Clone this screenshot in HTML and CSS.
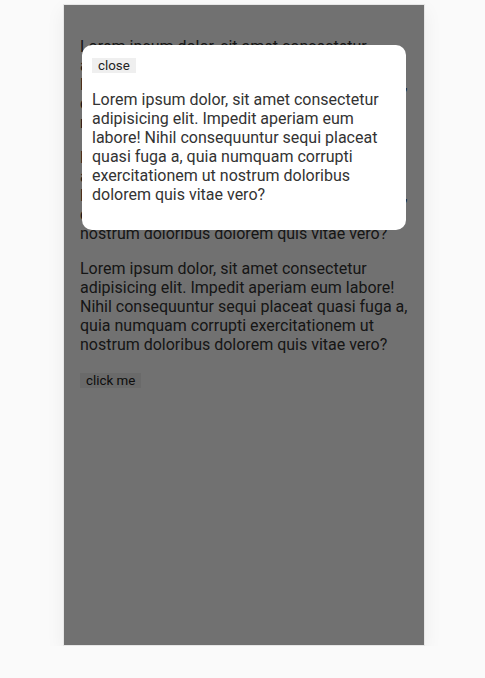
FILE: index.html
```html
<!DOCTYPE html>
<html lang="en">
<head>
    <meta charset="UTF-8">
    <meta name="viewport" content="width=device-width, initial-scale=1.0">
    <link rel="stylesheet" href="styles.css">
    <title>Modal</title>
</head>
<body class="page">
    <div class="device">
        <div class="content">
            <p>Lorem ipsum dolor, sit amet consectetur adipisicing elit. Impedit aperiam eum labore! Nihil consequuntur sequi placeat quasi fuga a, quia numquam corrupti exercitationem ut nostrum doloribus dolorem quis vitae vero?</p>
            <p>Lorem ipsum dolor, sit amet consectetur adipisicing elit. Impedit aperiam eum labore! Nihil consequuntur sequi placeat quasi fuga a, quia numquam corrupti exercitationem ut nostrum doloribus dolorem quis vitae vero?</p>
            <p>Lorem ipsum dolor, sit amet consectetur adipisicing elit. Impedit aperiam eum labore! Nihil consequuntur sequi placeat quasi fuga a, quia numquam corrupti exercitationem ut nostrum doloribus dolorem quis vitae vero?</p>
            <div><button class="btn">click me</button></div>
        </div>

        <div class="overlay"></div>

        <div class="modal">
            <div><button class="btn">close</button></div>
            <p>Lorem ipsum dolor, sit amet consectetur adipisicing elit. Impedit aperiam eum labore! Nihil consequuntur sequi placeat quasi fuga a, quia numquam corrupti exercitationem ut nostrum doloribus dolorem quis vitae vero?</p>
        </div>
    </div>
</body>
</html>
```

FILE: styles.css
```css
*{
    box-sizing: border-box;
}
.page{
    margin: 0;
    background: #fafafa;
    font-family: Roboto, "Liberation Sans", sans-serif;
    font-size: 16px;
    color: #333;
}
.device{
    position: relative;
    width: 362px;
    height: 642px;
    margin: 4px 0 0 63px;
    background: #fff;
    border: 1px solid #e6e6e6;
    box-shadow: 0 6px 18px rgba(0, 0, 0, 0.06);
    overflow: hidden;
}
.content{
    padding: 16px;
}
.content p{
    margin: 16px 0;
}
.btn{
    border: none;
    background: #efefef;
    color: #222;
    font-family: Roboto, "Liberation Sans", sans-serif;
    font-size: 13.333px;
    padding: 0 6px;
}
.overlay{
    position: absolute;
    top: 0;
    left: 0;
    width: 100%;
    height: 100%;
    background: rgba(0, 0, 0, 0.556);
}
.modal{
    position: absolute;
    top: 40px;
    left: 5%;
    width: 90%;
    background: #fff;
    border-radius: 10px;
    padding: 10px;
}
.modal p{
    margin: 16px 0;
}
```
